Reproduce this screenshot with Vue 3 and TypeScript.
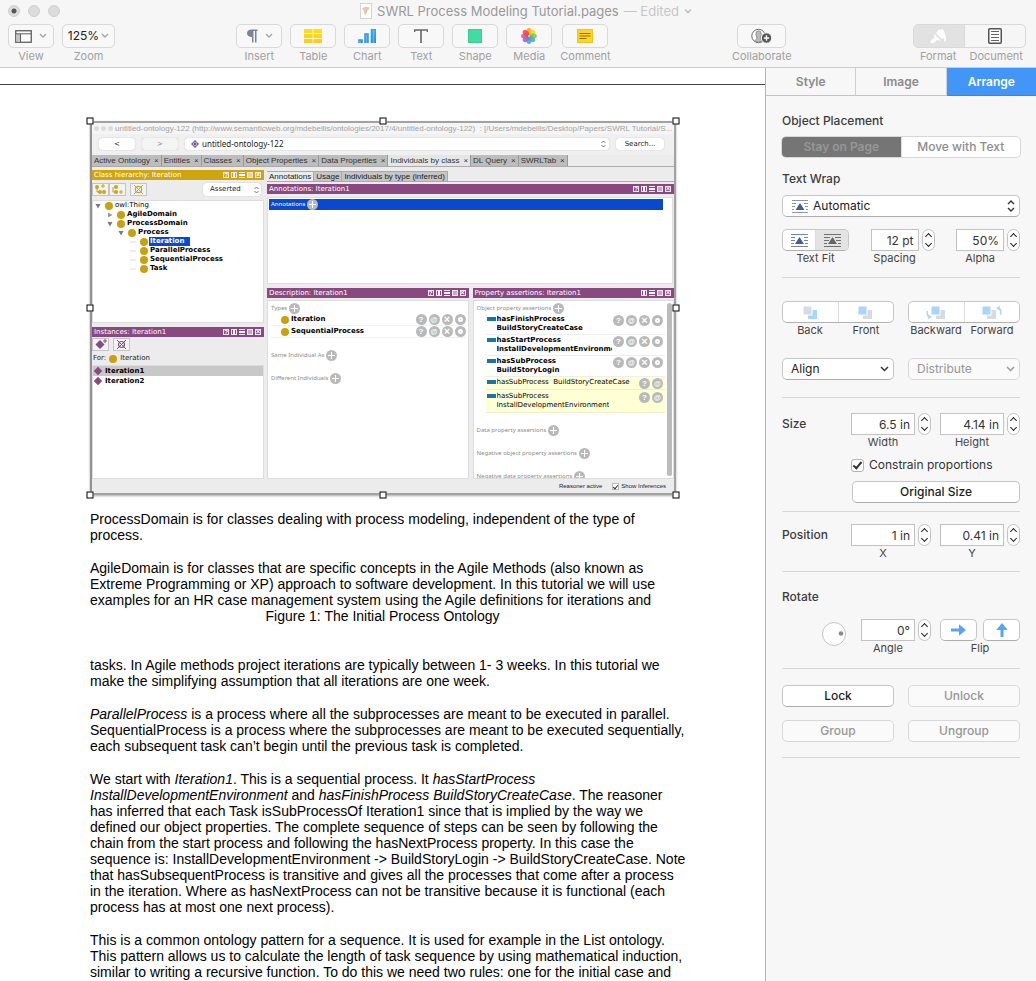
<script setup lang="ts">
import { ref } from 'vue'

interface Tool { id: string; label: string; menu?: boolean }

const insertTools: Tool[] = [
  { id: 'insert', label: 'Insert', menu: true },
  { id: 'table', label: 'Table' },
  { id: 'chart', label: 'Chart' },
  { id: 'text', label: 'Text' },
  { id: 'shape', label: 'Shape' },
  { id: 'media', label: 'Media' },
  { id: 'comment', label: 'Comment' },
]

const petals = [
  { angle: 0, color: '#f9a01b' },
  { angle: 45, color: '#f2d21a' },
  { angle: 90, color: '#8fc63d' },
  { angle: 135, color: '#3fb8a0' },
  { angle: 180, color: '#4aa0dc' },
  { angle: 225, color: '#8a6bd0' },
  { angle: 270, color: '#d84fb0' },
  { angle: 315, color: '#f0483e' },
]

const panes = ['Style', 'Image', 'Arrange']
const activePane = ref('Arrange')

const spacing = ref('12 pt')
const alpha = ref('50%')
const width = ref('6.5 in')
const height = ref('4.14 in')
const posX = ref('1 in')
const posY = ref('0.41 in')
const angle = ref('0°')
const constrain = ref(true)
const inferences = ref(true)

const handles = ['nw', 'n', 'ne', 'w', 'e', 'sw', 's', 'se']

const ontologyTabs = ['Active Ontology', 'Entities', 'Classes', 'Object Properties', 'Data Properties', 'Individuals by class', 'DL Query', 'SWRLTab']
const annotationTabs = ['Annotations', 'Usage', 'Individuals by type (inferred)']

interface TreeNode { name: string; level: number; arrow?: 'open' | 'closed'; selected?: boolean }
const tree: TreeNode[] = [
  { name: 'owl:Thing', level: 0, arrow: 'open' },
  { name: 'AgileDomain', level: 1, arrow: 'closed' },
  { name: 'ProcessDomain', level: 1, arrow: 'open' },
  { name: 'Process', level: 2, arrow: 'open' },
  { name: 'Iteration', level: 3, selected: true },
  { name: 'ParallelProcess', level: 3 },
  { name: 'SequentialProcess', level: 3 },
  { name: 'Task', level: 3 },
]

const types = ['Iteration', 'SequentialProcess']
const asserted = [
  ['hasFinishProcess', 'BuildStoryCreateCase'],
  ['hasStartProcess', 'InstallDevelopmentEnvironment'],
  ['hasSubProcess', 'BuildStoryLogin'],
]
const fullMarks = ['help', 'at', 'x', 'o']
const shortMarks = ['help', 'at']
const allFrames = ['help', 'col', 'row', 'max', 'x']
const someFrames = ['col', 'row', 'max', 'x']
</script>

<template>
  <div class="window">
    <header class="chrome">
      <div class="titlebar">
        <div class="lights"><i class="dot"></i><i></i><i></i></div>
        <div class="title">
          <svg width="12" height="16" viewBox="0 0 12 16"><rect x=".5" y=".5" width="11" height="15" fill="#fff" stroke="#d4d4d4" /><path d="M2 5.500Q5 2.500 9.500 4.500L8.500 7H6.500L4.500 12.500L4 8Z" fill="#f3c79d" /><path d="M6 6.500l1.500 1-2.500 5.500z" fill="#b9bec8" /></svg>
          <span>SWRL Process Modeling Tutorial.pages</span>
          <span class="faint">— Edited</span>
          <svg width="8" height="6" viewBox="0 0 8 6"><path d="M1 1.500l3 3 3-3" fill="none" stroke="#bcbcbc" stroke-width="1.500" /></svg>
        </div>
      </div>
      <div class="toolbar">
        <div class="group">
          <div class="tool">
            <button id="tool-view" class="toolbtn" aria-label="View">
              <svg width="17" height="13" viewBox="0 0 17 13"><rect x=".75" y=".75" width="15.500" height="11.500" fill="#fff" stroke="#5c5c5c" stroke-width="1.300" /><rect x="1.500" y="4" width="4" height="7.500" fill="#c4c4c4" /><path d="M1 3.800h15M5.500 4v8" stroke="#5c5c5c" /></svg>
              <svg class="more" width="8" height="6" viewBox="0 0 8 6"><path d="M1 1l3 3 3-3" fill="none" stroke="#a4a4a4" stroke-width="1.300" /></svg>
            </button>
            <label for="tool-view">View</label>
          </div>
          <div class="tool">
            <button id="tool-zoom" class="toolbtn zoom" aria-label="Zoom 125%">
              125%
              <svg width="8" height="6" viewBox="0 0 8 6"><path d="M1 1l3 3 3-3" fill="none" stroke="#a4a4a4" stroke-width="1.300" /></svg>
            </button>
            <label for="tool-zoom">Zoom</label>
          </div>
        </div>

        <div class="group">
          <div v-for="t in insertTools" :key="t.id" class="tool">
            <button :id="'tool-' + t.id" class="toolbtn" :aria-label="t.label">
              <svg v-if="t.id === 'insert'" width="12" height="14" viewBox="0 0 12 14"><path d="M6 .5H11.500V2H10.500V13.500H9V2H7.500V13.500H6V8Q1 8 1 4.300Q1 .5 6 .5Z" fill="#76869a" /></svg>
              <svg v-else-if="t.id === 'table'" width="18" height="14" viewBox="0 0 18 14"><defs><linearGradient id="gold" x2="0" y2="1"><stop stop-color="#fbe11c" /><stop offset="1" stop-color="#fdc91f" /></linearGradient></defs><rect width="18" height="14" fill="url(#gold)" /><path d="M0 4.500h18M0 9.500h18M9 0v14" stroke="#fdf6c8" /></svg>
              <svg v-else-if="t.id === 'chart'" width="18" height="14" viewBox="0 0 18 14"><defs><linearGradient id="blue" x2="0" y2="1"><stop stop-color="#38b3ef" /><stop offset="1" stop-color="#2b85de" /></linearGradient></defs><path d="M.5 10.500h4V14h-4zM6.500 4.500h4V14h-4zM13 0h5v14h-5z" fill="url(#blue)" stroke="#2f8ee0" stroke-width=".5" /><path d="M2 11.500V14M8.500 6v8M15.500 1v13" stroke="#58bdf3" stroke-width="1.500" /></svg>
              <svg v-else-if="t.id === 'text'" width="14" height="14" viewBox="0 0 14 14"><path d="M0 1h14M7 1v13M.5 1v2M13.500 1v2" fill="none" stroke="#666" stroke-width="1.600" /></svg>
              <svg v-else-if="t.id === 'shape'" width="14" height="14" viewBox="0 0 14 14"><rect x=".5" y=".5" width="13" height="13" fill="#42dca2" stroke="#38cf94" /></svg>
              <svg v-else-if="t.id === 'media'" width="16" height="16" viewBox="0 0 16 16"><ellipse v-for="p in petals" :key="p.angle" cx="8" cy="3.800" rx="2.600" ry="3.700" :fill="p.color" opacity=".88" :transform="'rotate(' + p.angle + ' 8 8)'" /><circle cx="8" cy="8" r=".8" fill="#fff" /></svg>
              <svg v-else width="16" height="14" viewBox="0 0 16 14"><rect x=".5" y=".5" width="15" height="13" fill="#fdd61f" stroke="#efc51b" /><path d="M2.500 4.500h11M2.500 7h11M2.500 9.500h7" stroke="#8f6d14" /></svg>
              <svg v-if="t.menu" class="more" width="8" height="6" viewBox="0 0 8 6"><path d="M1 1l3 3 3-3" fill="none" stroke="#a4a4a4" stroke-width="1.300" /></svg>
            </button>
            <label :for="'tool-' + t.id">{{ t.label }}</label>
          </div>
        </div>

        <div class="group">
          <div class="tool">
            <button id="tool-collab" class="toolbtn collab" aria-label="Collaborate">
              <svg width="22" height="16" viewBox="0 0 22 16"><circle cx="7.500" cy="8" r="6.700" fill="#fff" stroke="#6a6a6a" /><path d="M3.500 13Q5.500 11.500 6 10Q4 6 5.500 3.700Q7.500 2 9.700 3.700Q11 6 9.300 10L11 13Q7.500 15.500 3.500 13Z" fill="#bbb" stroke="#858585" stroke-width=".8" /><circle cx="15.500" cy="10" r="5.200" fill="#555" stroke="#f7f7f7" stroke-width="1" /><path d="M12.800 10h5.400M15.500 7.300v5.400" stroke="#fff" stroke-width="1.400" /></svg>
            </button>
            <label for="tool-collab">Collaborate</label>
          </div>
        </div>

        <div class="switcher">
          <div class="switch">
            <button id="tool-format" class="on" aria-label="Format">
              <svg width="17" height="16" viewBox="0 0 17 16"><path d="M6 5L9.500 1L11 2.300L12.300 .8L14 3.500L15.800 8V13Q15 14.500 14.200 13V10L11.800 11Z" fill="#fff" /><path d="M4.200 6.200L10.700 12.300L9.200 12.800L7.300 11.800L4.200 14.600Q2.500 16 1 14.800Q-.3 13.500 1.500 12L4.800 9.500L3.700 7.500Z" fill="#fff" /></svg>
            </button>
            <button id="tool-document" aria-label="Document">
              <svg width="14" height="16" viewBox="0 0 14 16"><rect x=".75" y=".75" width="12.500" height="14.500" rx="1" fill="#fff" stroke="#555" stroke-width="1.500" /><path d="M3 3.500h8M3 6.500h8M3 9.500h8M3 12.500h8" stroke="#666" /></svg>
            </button>
          </div>
          <div class="switchlabels"><label for="tool-format">Format</label><label for="tool-document">Document</label></div>
        </div>
      </div>
    </header>

    <div class="main">
      <main class="page">
        <hr class="pagerule">
        <article class="sheet">
          <figure class="figure">
            <div class="ontology">
              <div class="o-title"><i></i><i></i><i></i><span>untitled-ontology-122 (http://www.semanticweb.org/mdebellis/ontologies/2017/4/untitled-ontology-122)&nbsp; : [/Users/mdebellis/Desktop/Papers/SWRL Tutorial/S...</span></div>
              <div class="o-nav">
                <button>&lt;</button>
                <button class="dim">&gt;</button>
                <div class="o-field">
                  <svg width="8" height="8" viewBox="0 0 8 8"><path d="M4 0l4 4-4 4-4-4z" fill="#6b55a5" /><circle cx="4" cy="4" r="1.800" fill="none" stroke="#d8cfee" stroke-width=".8" /></svg>
                  <select aria-label="Ontology"><option>untitled-ontology-122</option></select>
                  <svg width="5" height="8" viewBox="0 0 5 8"><path d="M.5 3l2-2 2 2M.5 5l2 2 2-2" fill="none" stroke="#555" stroke-width=".8" /></svg>
                </div>
                <button class="o-search">Search...</button>
              </div>
              <nav class="o-tabs">
                <button v-for="t in ontologyTabs" :key="t" :class="{ on: t === 'Individuals by class' }">{{ t }}<span>×</span></button>
              </nav>
              <div class="o-body">
                <section class="o-left">
                  <div class="bar gold"><span>Class hierarchy: Iteration</span><span class="frames"><i v-for="f in allFrames" :key="f" :class="f"></i></span></div>
                  <div class="o-tools">
                    <button aria-label="Add subclass"><svg width="13" height="11" viewBox="0 0 13 11"><circle cx="3" cy="3" r="2" fill="#c9a51c" /><circle cx="6" cy="8" r="2" fill="#c9a51c" /><circle cx="10" cy="8" r="2" fill="#c9a51c" /><path d="M3 3v5h3M9 0v4M7 2h4" fill="none" stroke="#c9a51c" /></svg></button>
                    <button aria-label="Add sibling"><svg width="13" height="11" viewBox="0 0 13 11"><circle cx="5" cy="3" r="2" fill="#c9a51c" /><circle cx="5" cy="8" r="2" fill="#c9a51c" /><path d="M2 3v5h3M10 6v4M8 8h4" fill="none" stroke="#c9a51c" /></svg></button>
                    <button class="apart" aria-label="Delete class"><svg width="11" height="11" viewBox="0 0 11 11"><circle cx="5.500" cy="5.500" r="3.200" fill="none" stroke="#c9a51c" stroke-width="1.200" /><path d="M1 1l9 9M10 1l-9 9" stroke="#c9a51c" /></svg></button>
                    <span class="o-asserted">
                      <select aria-label="Hierarchy"><option>Asserted</option></select>
                      <svg width="5" height="8" viewBox="0 0 5 8"><path d="M.5 3l2-2 2 2M.5 5l2 2 2-2" fill="none" stroke="#555" stroke-width=".8" /></svg>
                    </span>
                  </div>
                  <ul class="tree">
                    <li v-for="n in tree" :key="n.name" :class="['l' + n.level, { sel: n.selected }]">
                      <svg width="6" height="6" viewBox="0 0 6 6"><path v-if="n.arrow === 'open'" d="M.5 1h5l-2.500 4.500z" fill="#777" /><path v-else-if="n.arrow === 'closed'" d="M1 .5v5l4.500-2.500z" fill="#999" /><path v-else d="M0 3h6" stroke="#ddd" /></svg>
                      <b class="ball"></b><span>{{ n.name }}</span>
                    </li>
                  </ul>
                  <div class="bar plum"><span>Instances: Iteration1</span><span class="frames"><i v-for="f in allFrames" :key="f" :class="f"></i></span></div>
                  <div class="o-tools tight">
                    <button aria-label="Add individual"><svg width="13" height="11" viewBox="0 0 13 11"><path d="M6 1l4.500 4.500L6 10 1.500 5.500z" fill="#884a80" /><path d="M11 0v4M9 2h4" stroke="#884a80" /></svg></button>
                    <button class="apart" aria-label="Delete individual"><svg width="11" height="11" viewBox="0 0 11 11"><circle cx="5.500" cy="5.500" r="3" fill="none" stroke="#884a80" stroke-width="1.200" /><path d="M1 1l9 9M10 1l-9 9" stroke="#884a80" /></svg></button>
                  </div>
                  <div class="o-for"><span>For:</span><b class="ball"></b><span>Iteration</span></div>
                  <ul class="instances">
                    <li class="sel"><i></i>Iteration1</li>
                    <li><i></i>Iteration2</li>
                  </ul>
                </section>
                <section class="o-right">
                  <nav class="o-subtabs">
                    <button v-for="t in annotationTabs" :key="t" :class="{ on: t === 'Annotations' }">{{ t }}</button>
                  </nav>
                  <div class="bar plum"><span>Annotations: Iteration1</span><span class="frames"><i v-for="f in allFrames" :key="f" :class="f"></i></span></div>
                  <div class="o-annot"><div class="blue"><span>Annotations</span><button class="round plus" aria-label="Add annotation"></button></div></div>
                  <div class="o-pair">
                    <div class="o-desc">
                      <div class="bar plum"><span>Description: Iteration1</span><span class="frames"><i v-for="f in allFrames" :key="f" :class="f"></i></span></div>
                      <div class="panel">
                        <div class="head">Types<button class="round plus" aria-label="Add type"></button></div>
                        <div v-for="t in types" :key="t" class="typerow"><b class="ball"></b><span>{{ t }}</span><span class="marks"><button v-for="m in fullMarks" :key="m" :class="['round', m]" :aria-label="m"></button></span></div>
                        <div class="head spaced">Same Individual As<button class="round plus" aria-label="Add same individual"></button></div>
                        <div class="head spaced">Different Individuals<button class="round plus" aria-label="Add different individual"></button></div>
                      </div>
                    </div>
                    <div class="o-prop">
                      <div class="bar plum"><span>Property assertions: Iteration1</span><span class="frames"><i v-for="f in someFrames" :key="f" :class="f"></i></span></div>
                      <div class="panel scroll">
                        <div class="rows">
                          <div class="head">Object property assertions<button class="round plus" aria-label="Add object property assertion"></button></div>
                          <div v-for="a in asserted" :key="a[0]" class="prop"><i class="tag"></i><span class="names"><span>{{ a[0] }}</span><span>{{ a[1] }}</span></span><span class="marks"><button v-for="m in fullMarks" :key="m" :class="['round', m]" :aria-label="m"></button></span></div>
                          <div class="prop inferred single"><i class="tag"></i><span class="names"><span>hasSubProcess&nbsp; BuildStoryCreateCase</span></span><span class="marks"><button v-for="m in shortMarks" :key="m" :class="['round', m]" :aria-label="m"></button></span></div>
                          <div class="prop inferred"><i class="tag"></i><span class="names"><span>hasSubProcess</span><span>InstallDevelopmentEnvironment</span></span><span class="marks"><button v-for="m in shortMarks" :key="m" :class="['round', m]" :aria-label="m"></button></span></div>
                          <div class="head spaced">Data property assertions<button class="round plus" aria-label="Add data property assertion"></button></div>
                          <div class="head spaced">Negative object property assertions<button class="round plus" aria-label="Add negative object assertion"></button></div>
                          <div class="head spaced">Negative data property assertions<button class="round plus" aria-label="Add negative data assertion"></button></div>
                        </div>
                        <div class="thumb"></div>
                      </div>
                    </div>
                  </div>
                </section>
              </div>
              <div class="o-status"><span>Reasoner active</span><input id="inferences" v-model="inferences" type="checkbox"><label for="inferences">Show Inferences</label></div>
            </div>
            <i v-for="h in handles" :key="h" :class="['handle', h]"></i>
          </figure>

          <p class="first">ProcessDomain is for classes dealing with process modeling, independent of the type of<br>process.</p>
          <p class="flush">AgileDomain is for classes that are specific concepts in the Agile Methods (also known as<br>Extreme Programming or XP) approach to software development. In this tutorial we will use<br>examples for an HR case management system using the Agile definitions for iterations and</p>
          <p class="caption">Figure 1: The Initial Process Ontology</p>
          <p>tasks. In Agile methods project iterations are typically between 1- 3 weeks. In this tutorial we<br>make the simplifying assumption that all iterations are one week.</p>
          <p><em>ParallelProcess</em> is a process where all the subprocesses are meant to be executed in parallel.<br>SequentialProcess is a process where the subprocesses are meant to be executed sequentially,<br>each subsequent task can’t begin until the previous task is completed.</p>
          <p>We start with <em>Iteration1</em>. This is a sequential process. It <em>hasStartProcess</em><br><em>InstallDevelopmentEnvironment</em> and <em>hasFinishProcess BuildStoryCreateCase</em>. The reasoner<br>has inferred that each Task isSubProcessOf Iteration1 since that is implied by the way we<br>defined our object properties. The complete sequence of steps can be seen by following the<br>chain from the start process and following the hasNextProcess property. In this case the<br>sequence is: InstallDevelopmentEnvironment -&gt; BuildStoryLogin -&gt; BuildStoryCreateCase. Note<br>that hasSubsequentProcess is transitive and gives all the processes that come after a process<br>in the iteration. Where as hasNextProcess can not be transitive because it is functional (each<br>process has at most one next process).</p>
          <p>This is a common ontology pattern for a sequence. It is used for example in the List ontology.<br>This pattern allows us to calculate the length of task sequence by using mathematical induction,<br>similar to writing a recursive function. To do this we need two rules: one for the initial case and</p>
        </article>
      </main>

      <aside class="inspector">
        <nav class="panes">
          <button v-for="p in panes" :key="p" :class="{ on: p === activePane }" @click="activePane = p">{{ p }}</button>
        </nav>

        <section class="s-place">
          <h2>Object Placement</h2>
          <div class="seg placement"><button class="dark" disabled>Stay on Page</button><button class="muted" disabled>Move with Text</button></div>
          <h2 class="wraphead">Text Wrap</h2>
          <div class="pop automatic">
            <svg class="wrapicon" width="16" height="13" viewBox="0 0 16 13"><path d="M0 .5h16M0 12.500h16M0 3.500h4M12 3.500h4M0 6.500h3M13 6.500h3M0 9.500h2M14 9.500h2" stroke="#8a94a2" /><path d="M8 3l4.500 7h-9z" fill="#3d5da5" /></svg>
            <select aria-label="Text Wrap"><option>Automatic</option></select>
            <svg width="8" height="12" viewBox="0 0 8 12"><path d="M1 4l3-3 3 3M1 8l3 3 3-3" fill="none" stroke="#333" stroke-width="1.400" /></svg>
          </div>
          <div class="fitrow">
            <div class="fit">
              <div class="seg">
                <button aria-label="Fit rectangle"><svg width="17" height="13" viewBox="0 0 17 13"><path d="M0 .5h17M0 12.500h17M0 3.500h4M13 3.500h4M0 6.500h4M13 6.500h4M0 9.500h3M14 9.500h3" stroke="#7e8590" /><path d="M8.500 3l4.500 7h-9z" fill="#3d5da5" /></svg></button>
                <button class="gray" aria-label="Fit contour"><svg width="17" height="13" viewBox="0 0 17 13"><path d="M0 .5h17M0 12.500h17M0 3.500h6M11 3.500h6M0 6.500h5M12 6.500h5M0 9.500h3M14 9.500h3" stroke="#707070" /><path d="M8.500 3l4.500 7h-9z" fill="#666" /></svg></button>
              </div>
              <small>Text Fit</small>
            </div>
            <div class="num short"><input id="spacing" v-model="spacing"><span class="step"><button aria-label="Increase spacing"></button><button aria-label="Decrease spacing"></button></span><label for="spacing">Spacing</label></div>
            <div class="num short"><input id="alpha" v-model="alpha"><span class="step"><button aria-label="Increase alpha"></button><button aria-label="Decrease alpha"></button></span><label for="alpha">Alpha</label></div>
          </div>
        </section>

        <section class="s-order">
          <div class="two">
            <div>
              <div class="seg">
                <button id="back" aria-label="Back"><svg width="15" height="13" viewBox="0 0 15 13"><rect x="5" y="4" width="9" height="9" fill="#a7d5fb" /><rect x="0" y="0" width="9" height="9" fill="#d5dbe3" stroke="#fff" /></svg></button>
                <button id="front" aria-label="Front"><svg width="15" height="13" viewBox="0 0 15 13"><rect x="5" y="4" width="9" height="9" fill="#d5dbe3" /><rect x="0" y="0" width="9" height="9" fill="#a7d5fb" stroke="#fff" /></svg></button>
              </div>
              <div class="pairlabels"><label for="back">Back</label><label for="front">Front</label></div>
            </div>
            <div>
              <div class="seg">
                <button id="backward" aria-label="Backward"><svg width="20" height="13" viewBox="0 0 20 13"><rect x="10" y="4" width="9" height="9" fill="#d5dbe3" /><rect x="5" y="0" width="9" height="9" fill="#a7d5fb" stroke="#fff" /><path d="M1.500 5Q.5 10 3.500 11" fill="none" stroke="#a7d5fb" stroke-width="1.500" /><path d="M2.500 8.500l3.500 2.500-4 2z" fill="#a7d5fb" /></svg></button>
                <button id="forward" aria-label="Forward"><svg width="20" height="13" viewBox="0 0 20 13"><rect x="5" y="4" width="9" height="9" fill="#d5dbe3" /><rect x="0" y="0" width="9" height="9" fill="#a7d5fb" stroke="#fff" /><path d="M18.500 8.500Q19.500 3 16.500 2" fill="none" stroke="#a7d5fb" stroke-width="1.500" /><path d="M17.500 4.500l-3.500-2.500 4-2z" fill="#a7d5fb" /></svg></button>
              </div>
              <div class="pairlabels"><label for="backward">Backward</label><label for="forward">Forward</label></div>
            </div>
          </div>
          <div class="two menus">
            <div class="pop"><select aria-label="Align"><option>Align</option></select><svg width="9" height="6" viewBox="0 0 9 6"><path d="M1 1l3.500 3.500L8 1" fill="none" stroke="#333" stroke-width="1.500" /></svg></div>
            <div class="pop off"><select aria-label="Distribute" disabled><option>Distribute</option></select><svg width="9" height="6" viewBox="0 0 9 6"><path d="M1 1l3.500 3.500L8 1" fill="none" stroke="#999" stroke-width="1.500" /></svg></div>
          </div>
        </section>

        <section class="s-size">
          <div class="measure">
            <h2>Size</h2>
            <div class="num"><input id="w" v-model="width"><span class="step"><button aria-label="Increase width"></button><button aria-label="Decrease width"></button></span><label for="w">Width</label></div>
            <div class="num"><input id="h" v-model="height"><span class="step"><button aria-label="Increase height"></button><button aria-label="Decrease height"></button></span><label for="h">Height</label></div>
          </div>
          <div class="constrain"><input id="constrain" v-model="constrain" type="checkbox"><label for="constrain">Constrain proportions</label></div>
          <button class="push original">Original Size</button>
        </section>

        <section class="s-position">
          <div class="measure">
            <h2>Position</h2>
            <div class="num"><input id="x" v-model="posX"><span class="step"><button aria-label="Increase X"></button><button aria-label="Decrease X"></button></span><label for="x">X</label></div>
            <div class="num"><input id="y" v-model="posY"><span class="step"><button aria-label="Increase Y"></button><button aria-label="Decrease Y"></button></span><label for="y">Y</label></div>
          </div>
        </section>

        <section class="s-rotate">
          <h2>Rotate</h2>
          <div class="rotaterow">
            <button class="knob" aria-label="Rotation dial"><svg width="24" height="24" viewBox="0 0 24 24"><circle cx="12" cy="12" r="11.500" fill="#fff" stroke="#c2c2c2" /><circle cx="19" cy="11.500" r="2.300" fill="#8a8a8a" /></svg></button>
            <div class="num angle"><input id="angle" v-model="angle"><span class="step"><button aria-label="Increase angle"></button><button aria-label="Decrease angle"></button></span><label for="angle">Angle</label></div>
            <div class="flip">
              <button class="push" aria-label="Flip horizontally"><svg width="15" height="12" viewBox="0 0 15 12"><path d="M0 4.500h8V.3L15 6l-7 5.700V7.500H0z" fill="#56a5f4" /></svg></button>
              <button class="push" aria-label="Flip vertically"><svg width="12" height="14" viewBox="0 0 12 14"><path d="M4.500 14V7H.3L6 0l5.700 7H7.500v7z" fill="#56a5f4" /></svg></button>
              <small>Flip</small>
            </div>
          </div>
        </section>

        <section class="s-lock">
          <button class="push">Lock</button>
          <button class="push" disabled>Unlock</button>
          <button class="push" disabled>Group</button>
          <button class="push" disabled>Ungroup</button>
        </section>
      </aside>
    </div>
  </div>
</template>

<style>
html, body { margin: 0; height: 100%; }
body { overflow: hidden; background: #fff; }
</style>

<style scoped>
* { box-sizing: border-box; }
button, select, input { font: inherit; color: inherit; margin: 0; padding: 0; border: 0; background: none; appearance: none; outline: none; min-width: 0; }
button { display: flex; align-items: center; justify-content: center; }
svg { display: block; flex: none; }
h2, p, ul, figure { margin: 0; padding: 0; }
ul { list-style: none; }

.window { display: flex; flex-direction: column; height: 100vh; font: 12px/16px Inter, "Liberation Sans", sans-serif; color: #333; }

/* Window chrome */
.chrome { background: #f6f6f6; border-bottom: 1px solid #cdcdcd; height: 68px; flex: none; }
.titlebar { display: grid; grid-template-columns: 1fr auto 1fr; height: 24px; padding-left: 8px; }
.lights { display: flex; gap: 8px; padding-top: 5px; }
.lights i { width: 12px; height: 12px; border-radius: 50%; background: #dcdcdc; border: 1px solid #cfcfcf; }
.lights .dot { background: radial-gradient(circle, #555 2px, #dcdcdc 3px); }
.title { display: flex; align-items: center; gap: 5px; padding-left: 8px; font-size: 13px; color: #999; height: 22px; white-space: nowrap; }
.faint { color: #c6c6c6; }
.toolbar { display: flex; justify-content: space-between; padding: 0 10px 0 8px; }
.group { display: flex; gap: 8px; }
.tool { display: flex; flex-direction: column; align-items: center; font-size: 11px; color: #a0a0a0; }
.toolbtn { width: 46px; height: 24px; border: 1px solid #d9d9d9; border-radius: 5px; background: #f8f8f8; gap: 7px; }
.toolbtn.zoom { width: 53px; font-size: 12px; color: #222; gap: 2px; }
.toolbtn.collab { width: 49px; }
.switch { display: flex; border: 1px solid #d9d9d9; border-radius: 5px; overflow: hidden; height: 24px; }
.switch button { width: 60px; }
.switch .on { width: 51px; background: #e2e2e2; border-right: 1px solid #d9d9d9; }
.switchlabels { display: flex; justify-content: space-between; padding: 0 3px 0 7px; font-size: 11px; color: #a0a0a0; }

.main { display: flex; flex: 1; min-height: 0; }

/* Document */
.page { flex: 1; min-width: 0; overflow: hidden; background: #fff; }
.pagerule { margin: 16px 0 36px; border: 0; border-top: 1px solid #444; }
.sheet { padding: 0 90px; font: 14px/16px "Liberation Sans", Arial, sans-serif; color: #000; white-space: nowrap; }
.sheet p { margin-bottom: 17px; }
.sheet .first { margin-top: 16px; }
.sheet .flush { margin-bottom: 0; }
.sheet .caption { text-align: center; margin-bottom: 33px; }
.figure { position: relative; height: 374px; margin-right: -1px; }
.handle { position: absolute; width: 7px; height: 7px; background: #fff; border: 1px solid #000; transform: translate(-50%, -50%); }
.nw { left: 0; top: 0; } .n { left: 50%; top: 0; } .ne { left: 100%; top: 0; }
.w { left: 0; top: 50%; } .e { left: 100%; top: 50%; }
.sw { left: 0; top: 100%; } .s { left: 50%; top: 100%; } .se { left: 100%; top: 100%; }

/* Ontology editor shown in the figure */
.ontology { display: flex; flex-direction: column; height: 100%; border: 2px solid #a2a2a2; border-left-color: #929292; background: #ececec; font: 7px/9px "DejaVu Sans", sans-serif; color: #222; overflow: hidden; box-shadow: 0 1px 2px #aaa; }
.o-title { display: flex; align-items: center; gap: 2px; height: 11px; padding-left: 2px; background: #f5f5f5; font: 8px/10px "Liberation Sans", sans-serif; color: #a3a3a3; flex: none; }
.o-title i { width: 5px; height: 5px; border-radius: 50%; background: #dcdcdc; flex: none; }
.o-nav { display: flex; gap: 7px; height: 21px; padding: 4px 10px 5px 7px; background: #f0f0f0; flex: none; }
.o-nav button { width: 36px; background: #fff; border-radius: 3px; box-shadow: 0 0 1px #999; color: #222; }
.o-nav .dim { background: #f4f4f4; color: #888; }
.o-nav .o-search { width: 48px; }
.o-field { flex: 1; display: flex; align-items: center; gap: 3px; padding: 0 3px 0 6px; background: #fff; border-radius: 3px; box-shadow: 0 0 1px #999; font-family: "Noto Sans", sans-serif; font-size: 8px; }
.o-field select { flex: 1; height: 12px; line-height: 12px; }
.o-tabs { display: flex; height: 12px; border-bottom: 1px solid #aaa; background: #ececec; font: 8px/11px "Liberation Sans", sans-serif; flex: none; }
.o-tabs button { background: #bdbdbd; padding: 0 2px; gap: 4px; border-right: 1px solid #999; color: #333; }
.o-tabs .on { background: #e6e6e6; }
.o-body { flex: 1; display: flex; gap: 3px; min-height: 0; }
.o-left { width: 172px; display: flex; flex-direction: column; padding-top: 3px; flex: none; }
.o-right { flex: 1; min-width: 0; display: flex; flex-direction: column; padding-top: 4px; }
.bar { display: flex; justify-content: space-between; align-items: center; height: 10px; padding: 0 3px 0 2px; color: #fff; flex: none; }
.gold { background: #cfa50d; }
.plum { background: #8a4881; }
.frames { display: flex; gap: 2px; }
.frames i { position: relative; width: 6px; height: 6px; border: 1px solid #f1e6ef; }
.frames .help::before { content: "?"; position: absolute; inset: -3px; font: bold 6px/10px "Liberation Sans", sans-serif; text-align: center; }
.frames .col { background: linear-gradient(90deg, transparent 1px, #fff 1px 3px, transparent 3px); }
.frames .row { background: linear-gradient(transparent 1px, #fff 1px 3px, transparent 3px); border-left: 0; border-right: 0; }
.frames .max { border-width: 1px; background: #fff8; }
.frames .x::before { content: "×"; position: absolute; inset: -3px; font: bold 7px/10px "Liberation Sans", sans-serif; text-align: center; }
.o-tools { display: flex; height: 13px; margin: 3px 3px 4px 0; flex: none; }
.o-tools.tight { margin: 1px 0; }
.o-tools button { width: 17px; border: 1px solid #c4c4c4; background: #f3f3f3; }
.o-tools .apart { margin-left: 4px; }
.o-asserted { display: flex; align-items: center; width: 58px; margin-left: auto; padding: 0 2px 0 7px; background: #fff; border-radius: 3px; box-shadow: 0 0 1px #999; }
.o-asserted select { flex: 1; }
.tree { height: 123px; padding: 0 2px; background: #fff; border: 1px solid #ddd; font-weight: bold; color: #000; flex: none; margin-bottom: 4px; }
.tree li { display: flex; align-items: center; height: 9px; gap: 4px; }
.tree li span { line-height: 9px; padding: 0 1px; margin-left: -3px; }
.tree .l0 { font-weight: normal; }
.tree .l1 { padding-left: 12px; }
.tree .l2 { padding-left: 23px; }
.tree .l3 { padding-left: 35px; }
.tree .sel span { background: #0849cf; color: #fff; padding-right: 6px; }
.ball { width: 8px; height: 8px; border-radius: 50%; background: #c9a00e; flex: none; }
.o-for { display: flex; align-items: center; gap: 3px; height: 13px; padding-left: 1px; flex: none; }
.instances { flex: 1; background: #fff; border: 1px solid #ddd; font-weight: bold; color: #000; }
.instances li { display: flex; align-items: center; gap: 3px; height: 10px; padding-left: 1px; }
.instances .sel { background: #c8c8c8; }
.instances i { width: 6px; height: 6px; margin: 0 1px; background: #884a80; transform: rotate(45deg); }
.o-subtabs { display: flex; height: 11px; border-bottom: 1px solid #aaa; margin-bottom: 2px; font: 8px/10px "Liberation Sans", sans-serif; flex: none; }
.o-subtabs button { padding: 0 2px; background: #c6c6c6; border: 1px solid #a8a8a8; border-width: 1px 1px 0 0; }
.o-subtabs .on { background: #ececec; }
.o-annot { height: 87px; margin: 3px 1px 4px 0; padding: 1px 9px 0 1px; background: #fff; border: 1px solid #ddd; flex: none; }
.blue { display: flex; align-items: center; gap: 2px; height: 11px; padding-left: 2px; background: #0849cf; color: #fff; font-family: "Noto Sans", sans-serif; font-size: 6px; }
.o-pair { flex: 1; display: flex; gap: 4px; min-height: 0; }
.o-desc, .o-prop { flex: 1; min-width: 0; display: flex; flex-direction: column; }
.panel { flex: 1; min-height: 0; margin-top: 2px; padding: 1px 2px 0 3px; background: #fff; border: 1px solid #ddd; overflow: hidden; }
.head { display: flex; align-items: center; gap: 2px; height: 12px; font-family: "Noto Sans", sans-serif; font-size: 6px; color: #8c8c8c; }
.spaced { margin-top: 11px; }
.typerow { display: flex; align-items: center; height: 12px; gap: 2px; padding-left: 10px; font-weight: bold; color: #000; border-bottom: 1px solid #f1f1f1; }
.marks { display: flex; gap: 2px; margin-left: auto; flex: none; }
.round { position: relative; width: 11px; height: 11px; border-radius: 50%; background: #b9b9b9; color: #fff; font: bold 8px/11px "Liberation Sans", sans-serif; flex: none; }
.plus { background: linear-gradient(#fff, #fff) center / 7px 1px no-repeat, linear-gradient(#fff, #fff) center / 1px 7px no-repeat, #b9b9b9; }
.help.round::before { content: "?"; }
.at.round::before { content: "@"; font-size: 7px; }
.x.round::before { content: "×"; font-size: 11px; }
.o.round::before { content: ""; width: 1px; height: 1px; border: 2px solid #fff; border-radius: 50%; }
.scroll { display: flex; padding-right: 1px; gap: 2px; }
.rows { flex: 1; min-width: 0; }
.thumb { width: 5px; height: 173px; background: #bcbcbc; border-radius: 3px; margin-top: 1px; }
.prop { display: flex; gap: 1px; height: 21px; margin-left: 9px; padding: 1px 2px 0 1px; font-weight: bold; color: #000; border-bottom: 1px solid #eee; }
.tag { width: 9px; height: 4px; margin-top: 2px; background: #1a74ab; flex: none; }
.names { display: flex; flex-direction: column; overflow: hidden; }
.inferred { background: #ffffd6; font-weight: normal; border-color: #efefc8; height: 23px; padding-top: 2px; }
.inferred.single { height: 13px; padding-top: 1px; }
.o-status { display: flex; align-items: center; justify-content: flex-end; gap: 2px; height: 14px; padding-right: 8px; font: 6px/8px "Liberation Sans", sans-serif; flex: none; }
.o-status input { width: 7px; height: 7px; margin-left: 8px; border: 1px solid #bbb; background: #fff; display: grid; place-items: center; }
.o-status input:checked::before { content: ""; width: 2px; height: 4px; border: solid #333; border-width: 0 1px 1px 0; transform: rotate(40deg); }

/* Inspector */
.inspector { width: 271px; flex: none; border-left: 1px solid #b4b4b4; background: #f7f7f7; }
.panes { display: flex; height: 28px; font-weight: 600; font-size: 12px; color: #8a8a8a; }
.panes button { flex: 1; border-right: 1px solid #d0d0d0; border-bottom: 1px solid #c4c4c4; }
.panes .on { background: #4296f8; color: #fff; border-color: #3b86dd; border-right: 0; }
.inspector section { margin: 0 16px; border-bottom: 1px solid #d8d8d8; }
h2 { font-size: 12px; line-height: 16px; font-weight: 500; color: #3c3c3c; }
small, .inspector .num label, .pairlabels { font-size: 11px; line-height: 14px; color: #444; }
.s-place { padding: 17px 0 12px; }
.seg { display: flex; height: 22px; border: 1px solid #c6c6c6; border-bottom-color: #b2b2b2; border-radius: 5px; background: #fff; overflow: hidden; }
.seg button { flex: 1; }
.seg button + button { border-left: 1px solid #ddd; }
.placement { margin: 7px -1px 13px; font-weight: 500; border-color: #d8d8d8; }
.seg .dark { background: #757575; color: #979797; font-weight: 600; }
.seg .muted { color: #8c8c8c; }
.seg .gray { background: #e3e3e3; }
.wraphead { margin-bottom: 8px; }
.pop { display: flex; align-items: center; height: 22px; padding: 0 4px 0 8px; border: 1px solid #c6c6c6; border-bottom-color: #adadad; border-radius: 5px; background: #fff; color: #222; }
.pop select { flex: 1; }
.automatic { gap: 5px; margin-bottom: 12px; padding-left: 9px; }
.off { background: #fafafa; color: #969696; border-color: #d8d8d8; }
.off select { opacity: 1; }
.fitrow { display: flex; justify-content: space-between; }
.fit { width: 67px; }
small { display: block; text-align: center; }
.num { display: grid; grid-template-columns: 64px 13px; column-gap: 3px; }
.num.short { grid-template-columns: 48px 13px; }
.num.angle { grid-template-columns: 54px 13px; }
.num input { width: 100%; height: 22px; padding-right: 4px; border: 1px solid #c2c2c2; background: #fff; text-align: right; color: #333; }
.num label { text-align: center; }
.step { display: flex; flex-direction: column; height: 22px; padding: 1px 0; border: 1px solid #c2c2c2; border-radius: 7px; background: #fff; }
.step button { flex: 1; }
.step button::before { content: ""; width: 4px; height: 4px; border: solid #222; border-width: 1px 0 0 1px; transform: translateY(1px) rotate(45deg); }
.step button + button::before { transform: translateY(-1px) rotate(225deg); }
.s-order { padding: 23px 0 17px; }
.two { display: grid; grid-template-columns: 1fr 1fr; gap: 14px; }
.pairlabels { display: grid; grid-template-columns: 1fr 1fr; text-align: center; }
.menus { margin-top: 21px; }
.s-size { padding: 15px 0 8px; }
.measure { display: flex; gap: 9px; }
.measure h2 { flex: 1; line-height: 22px; }
.constrain { display: flex; align-items: center; gap: 5px; height: 14px; margin: 9px 0 9px 69px; white-space: nowrap; }
.constrain input { width: 13px; height: 13px; border: 1px solid #b4b4b4; border-radius: 3px; background: #fff; display: grid; place-items: center; }
.constrain input:checked::before { content: ""; width: 3px; height: 7px; border: solid #333; border-width: 0 2px 2px 0; transform: translateY(-1px) rotate(40deg); }
.push { height: 22px; border: 1px solid #c6c6c6; border-bottom-color: #adadad; border-radius: 5px; background: #fff; font-weight: 500; color: #1c1c1c; }
.push:disabled { background: #fafafa; color: #969696; border-color: #d8d8d8; }
.original { width: 168px; margin-left: auto; }
.s-position { padding: 12px 0 11px; }
.s-rotate { padding: 17px 0 13px; }
.rotaterow { display: flex; justify-content: flex-end; margin-top: 14px; }
.knob { height: 24px; margin: 3px 15px 0 0; }
.flip { display: grid; grid-template-columns: 37px 37px; column-gap: 6px; margin-left: 9px; }
.flip small { grid-column: span 2; }
.s-lock { display: grid; grid-template-columns: 1fr 1fr; gap: 13px 14px; padding: 16px 0 15px; }
</style>
